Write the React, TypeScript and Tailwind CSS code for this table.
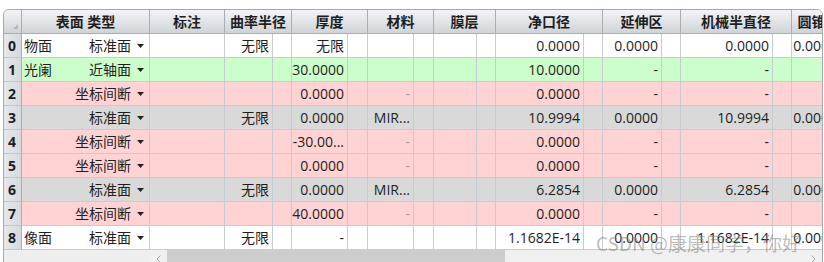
import React from "react";

type Cell = string | { t: string; gray: true };
type Row = { bg: string; name: string; type: string; vals: Cell[] };

const G = { t: "-", gray: true } as const;

const rows: Row[] = [
  { bg: "bg-white", name: "物面", type: "标准面", vals: ["无限", "无限", "", "", "0.0000", "0.0000", "0.0000", "0.0000"] },
  { bg: "bg-[#ccfecc]", name: "光阑", type: "近轴面", vals: ["", "30.0000", "", "", "10.0000", "-", "-", ""] },
  { bg: "bg-[#ffd3d3]", name: "", type: "坐标间断", vals: ["", "0.0000", G, "", "0.0000", "-", "-", ""] },
  { bg: "bg-[#d9d9d9]", name: "", type: "标准面", vals: ["无限", "0.0000", "MIR...", "", "10.9994", "0.0000", "10.9994", "0.0000"] },
  { bg: "bg-[#ffd3d3]", name: "", type: "坐标间断", vals: ["", "-30.00...", G, "", "0.0000", "-", "-", ""] },
  { bg: "bg-[#ffd3d3]", name: "", type: "坐标间断", vals: ["", "0.0000", G, "", "0.0000", "-", "-", ""] },
  { bg: "bg-[#d9d9d9]", name: "", type: "标准面", vals: ["无限", "0.0000", "MIR...", "", "6.2854", "0.0000", "6.2854", "0.0000"] },
  { bg: "bg-[#ffd3d3]", name: "", type: "坐标间断", vals: ["", "40.0000", G, "", "0.0000", "-", "-", ""] },
  { bg: "bg-white", name: "像面", type: "标准面", vals: ["无限", "-", "", "", "1.1682E-14", "0.0000", "1.1682E-14", "0.0000"] },
];

const heads = ["曲率半径", "厚度", "材料", "膜层", "净口径", "延伸区", "机械半直径", "圆锥系数"];

const Tri = () => (
  <svg width="7" height="4" viewBox="0 0 7 4" className="ml-[6px] shrink-0">
    <polygon points="0,0 7,0 3.5,4" fill="#222" />
  </svg>
);

export default function App() {
  return (
    <div className="w-[824px] h-[262px] overflow-hidden bg-white pl-[3px] pt-[9px] font-['Open_Sans','Noto_Sans_CJK_SC',sans-serif] text-[14px] text-[#1e1e1e]">
      <div className="relative w-[820px] h-[270px] border border-[#a3a9b0] rounded-t-[6px] overflow-hidden bg-white">
        <div className="grid w-max grid-cols-[18px_128px_75px_48px_19px_56px_20px_46px_20px_43px_19px_88px_19px_59px_19px_92px_19px_49px_19px]">
          {/* header */}
          <div className="h-[24px] flex items-end justify-end pr-[3px] pb-[4px] border-r border-b border-[#a8aeb5] bg-gradient-to-b from-[#f3f4f6] to-[#d0d4d9]">
            <svg width="5" height="5" viewBox="0 0 5 5">
              <polygon points="5,0 5,5 0,5" fill="#b3b7bc" />
            </svg>
          </div>
          <div className="h-[24px] flex items-center justify-center font-bold border-r border-b border-[#a8aeb5] bg-gradient-to-b from-[#f3f4f6] to-[#d0d4d9] whitespace-nowrap">
            表面 类型
          </div>
          <div className="h-[24px] flex items-center justify-center font-bold border-r border-b border-[#a8aeb5] bg-gradient-to-b from-[#f3f4f6] to-[#d0d4d9] whitespace-nowrap">
            标注
          </div>
          {heads.map((h) => (
            <div
              key={h}
              className="col-span-2 h-[24px] flex items-center justify-center font-bold border-r border-b border-[#a8aeb5] bg-gradient-to-b from-[#f3f4f6] to-[#d0d4d9] whitespace-nowrap"
            >
              {h}
            </div>
          ))}

          {/* rows */}
          {rows.map((r, i) => (
            <React.Fragment key={i}>
              <div className="h-[24px] flex items-center pl-[4px] font-bold leading-none border-r border-b border-r-[#a8aeb5] border-b-[#c3c7cc] bg-gradient-to-r from-[#e6e8eb] to-[#d6d9dd]">
                {i}
              </div>
              <div className={`h-[24px] flex items-center justify-between pl-[2px] pr-[5px] border-r border-b border-[#c8cbcf] whitespace-nowrap ${r.bg}`}>
                <span>{r.name}</span>
                <span className="flex items-center">
                  {r.type}
                  <Tri />
                </span>
              </div>
              <div className={`h-[24px] border-r border-b border-[#c8cbcf] ${r.bg}`} />
              {r.vals.map((v, j) => (
                <React.Fragment key={j}>
                  <div
                    className={`h-[24px] flex items-center justify-end pr-[3px] overflow-hidden whitespace-nowrap border-r border-b border-[#c8cbcf] ${r.bg} ${
                      typeof v === "object" ? "text-[#a0a0a0]" : ""
                    }`}
                  >
                    {typeof v === "object" ? v.t : v}
                  </div>
                  <div className={`h-[24px] border-r border-b border-[#c8cbcf] ${r.bg}`} />
                </React.Fragment>
              ))}
            </React.Fragment>
          ))}
        </div>

        {/* horizontal scrollbar */}
        <div className="flex h-[17px] bg-[#f0f0f0]">
          <div className="w-[146px] shrink-0 bg-[#eeeeee]" />
          <div className="w-[17px] shrink-0 flex items-center justify-center">
            <svg width="5" height="8" viewBox="0 0 5 8">
              <polyline points="4.5,0.5 1,4 4.5,7.5" fill="none" stroke="#a6a6a6" strokeWidth="1" />
            </svg>
          </div>
          <div className="w-[338px] shrink-0 bg-[#cdcdcd]" />
          <div className="flex-1" />
          <div className="w-[17px] shrink-0 flex items-center justify-center">
            <svg width="5" height="8" viewBox="0 0 5 8">
              <polyline points="0.5,0.5 4,4 0.5,7.5" fill="none" stroke="#a6a6a6" strokeWidth="1" />
            </svg>
          </div>
        </div>

        {/* watermark */}
        <div className="absolute left-[592px] top-[219px] text-[19px] leading-[28px] whitespace-nowrap text-[rgba(130,130,130,0.55)] font-['Noto_Sans_CJK_SC',sans-serif] pointer-events-none">
          CSDN @康康同学，你好
        </div>
      </div>
    </div>
  );
}
